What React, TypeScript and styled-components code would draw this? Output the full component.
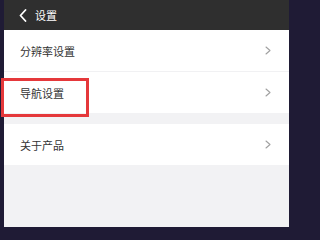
import React from "react";
import styled, { createGlobalStyle } from "styled-components";

const Global = createGlobalStyle`
  html, body { margin: 0; padding: 0; background: #1f1b35; }
  body {
    font-family: "Noto Sans CJK SC", "Noto Sans", sans-serif;
  }
`;

const Frame = styled.div`
  position: relative;
  display: flex;
  width: 292px;
  height: 227px;
  padding: 0 3px 0 4px;
  box-sizing: border-box;
  background: #1f1b35;
  overflow: hidden;
`;

const Screen = styled.div`
  flex: 1;
  display: flex;
  flex-direction: column;
  background: #f2f2f4;
`;

const Header = styled.div`
  height: 30px;
  display: flex;
  align-items: center;
  padding-left: 15px;
  gap: 8px;
  background: #2f2f2f;
  color: #ffffff;
  font-size: 11px;
`;

const Group = styled.div<{ $gap?: number }>`
  display: flex;
  flex-direction: column;
  background: #ffffff;
  margin-top: ${(p) => p.$gap ?? 0}px;
`;

const Row = styled.div<{ $divider?: boolean }>`
  height: 41px;
  display: flex;
  align-items: center;
  justify-content: space-between;
  padding: 0 18px 0 16px;
  font-size: 11px;
  color: #333333;
  border-bottom: ${(p) => (p.$divider ? "1px solid #f1f1f3" : "none")};
`;

const Highlight = styled.div`
  position: absolute;
  left: 1px;
  top: 78px;
  width: 88px;
  height: 39px;
  box-sizing: border-box;
  border: 3px solid #e5383b;
  pointer-events: none;
`;

const Chevron = ({ color, w, h, sw }: { color: string; w: number; h: number; sw: number }) => (
  <svg width={w} height={h} viewBox={`0 0 ${w} ${h}`} fill="none">
    <path
      d={`M1 1 L${w - 1} ${h / 2} L1 ${h - 1}`}
      stroke={color}
      strokeWidth={sw}
      strokeLinecap="round"
      strokeLinejoin="round"
    />
  </svg>
);

const BackIcon = () => (
  <svg width="8" height="13" viewBox="0 0 8 13" fill="none">
    <path d="M6.5 1 L1.5 6.5 L6.5 12" stroke="#ffffff" strokeWidth="1.8" strokeLinecap="round" strokeLinejoin="round" />
  </svg>
);

export default function App() {
  return (
    <>
      <Global />
      <Frame>
        <Screen>
          <Header>
            <BackIcon />
            <span>设置</span>
          </Header>
          <Group>
            <Row $divider>
              <span>分辨率设置</span>
              <Chevron color="#a0a0a0" w={6} h={9} sw={1.1} />
            </Row>
            <Row>
              <span>导航设置</span>
              <Chevron color="#a0a0a0" w={6} h={9} sw={1.1} />
            </Row>
          </Group>
          <Group $gap={11}>
            <Row>
              <span>关于产品</span>
              <Chevron color="#a0a0a0" w={6} h={9} sw={1.1} />
            </Row>
          </Group>
        </Screen>
        <Highlight />
      </Frame>
    </>
  );
}
